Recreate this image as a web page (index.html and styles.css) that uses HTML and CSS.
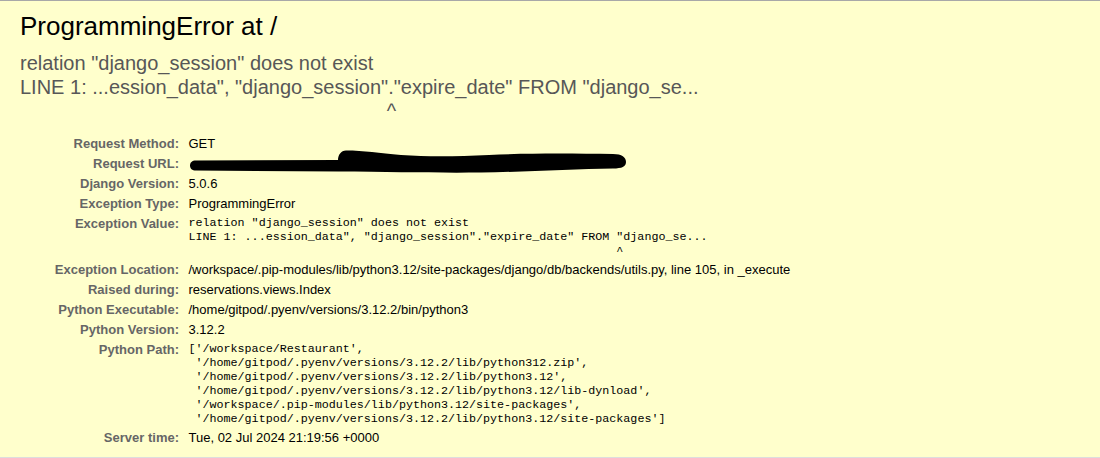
FILE: index.html
```html
<!DOCTYPE html>
<html lang="en">
<head>
<meta charset="utf-8">
<title>ProgrammingError at /</title>
<link rel="stylesheet" href="styles.css">
</head>
<body>
<header class="summary">
  <h1 class="title">ProgrammingError at /</h1>
  <pre class="exception-value">relation "django_session" does not exist
LINE 1: ...ession_data", "django_session"."expire_date" FROM "django_se...
                                                                  ^</pre>
  <table class="meta">
    <tbody>
      <tr><th>Request Method:</th><td>GET</td></tr>
      <tr><th>Request URL:</th><td><svg class="redact" width="440" height="16" viewBox="0 0 440 16" aria-hidden="true"><path d="M1 9.5 C1 6.5 3 4.5 7 4.5 L149 4 C149 -1 152 -5.5 157 -5.5 C175 -5.5 190 -3 212 -1 C240 1 268 0.5 300 -1 C340 -3 385 -2.5 424 -2 C433 -2 437 1.5 437 6 C437 10.5 433 12.5 424 12.5 C385 13 335 16 292 16.5 C250 17 205 16 150 15.5 L7 14.5 C3 14.5 1 12.5 1 9.5 Z" fill="#000"/></svg></td></tr>
      <tr><th>Django Version:</th><td>5.0.6</td></tr>
      <tr><th>Exception Type:</th><td>ProgrammingError</td></tr>
      <tr><th>Exception Value:</th><td><pre class="mono">relation "django_session" does not exist
LINE 1: ...ession_data", "django_session"."expire_date" FROM "django_se...
                                                             ^</pre></td></tr>
      <tr><th>Exception Location:</th><td>/workspace/.pip-modules/lib/python3.12/site-packages/django/db/backends/utils.py, line 105, in _execute</td></tr>
      <tr><th>Raised during:</th><td>reservations.views.Index</td></tr>
      <tr><th>Python Executable:</th><td>/home/gitpod/.pyenv/versions/3.12.2/bin/python3</td></tr>
      <tr><th>Python Version:</th><td>3.12.2</td></tr>
      <tr><th>Python Path:</th><td><pre class="mono">['/workspace/Restaurant',
 '/home/gitpod/.pyenv/versions/3.12.2/lib/python312.zip',
 '/home/gitpod/.pyenv/versions/3.12.2/lib/python3.12',
 '/home/gitpod/.pyenv/versions/3.12.2/lib/python3.12/lib-dynload',
 '/workspace/.pip-modules/lib/python3.12/site-packages',
 '/home/gitpod/.pyenv/versions/3.12.2/lib/python3.12/site-packages']</pre></td></tr>
      <tr><th>Server time:</th><td>Tue, 02 Jul 2024 21:19:56 +0000</td></tr>
    </tbody>
  </table>
</header>
</body>
</html>
```
FILE: styles.css
```css
* {
  margin: 0;
  padding: 0;
}

html {
  background: #fff;
}

body {
  font-family: "Liberation Sans", Arial, sans-serif;
  font-size: 13px;
  color: #000;
  border-top: 1px solid #a8a8a8;
}

.summary {
  background: #ffc;
  padding: 10px 20px 9px 20px;
  border-bottom: 1px solid #ddd;
}

.title {
  font-size: 26px;
  font-weight: normal;
  line-height: 30px;
}

.exception-value {
  font-family: "Liberation Sans", Arial, sans-serif;
  color: #575757;
  font-size: 20px;
  line-height: 24px;
  margin: 10px 0 0;
  white-space: pre-wrap;
}

.meta {
  border-collapse: collapse;
  width: 100%;
  margin-top: 11px;
}

.meta th {
  width: 12em;
  text-align: right;
  color: #666;
  font-weight: bold;
  vertical-align: top;
  padding: 2px 6.5px 2px 3px;
  line-height: 16px;
}

.meta td {
  vertical-align: top;
  padding: 2px 3px;
  line-height: 16px;
}

.redact {
  display: block;
  overflow: visible;
}

.mono {
  font-family: "Liberation Mono", "DejaVu Sans Mono", monospace;
  font-size: 11.7px;
  line-height: 14px;
  white-space: pre-wrap;
}
```
